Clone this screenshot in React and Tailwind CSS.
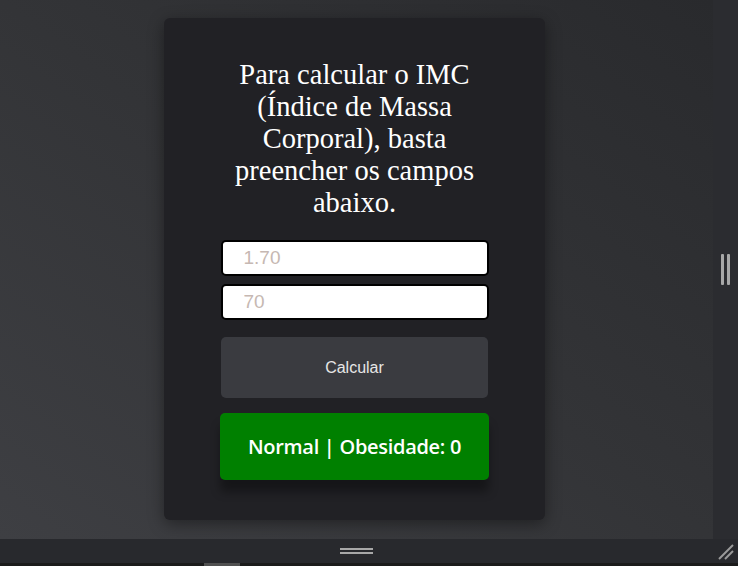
import React from 'react';

export default function App() {
    return (
        <div className="flex flex-col w-[738px] h-[566px] overflow-hidden bg-[#28292d]">
            <div className="flex flex-1 min-h-0">
                <div className="flex-1 pl-[164px] pt-[18px] bg-[linear-gradient(to_bottom_left,#292a2d_0%,#333437_50%,#3e3f43_100%)]">
                    <div className="w-[381px] h-[502px] rounded-[6px] bg-[#212125] shadow-[0_4px_16px_rgba(0,0,0,0.4)] flex flex-col items-center pt-[41px]">
                        <h1 className="w-[256px] text-center text-white text-[28.5px] leading-[32px] font-['Liberation_Serif',serif]">
                            Para calcular o IMC (Índice de Massa Corporal), basta preencher os campos abaixo.
                        </h1>
                        <div className="mt-[21px] w-[268px] flex flex-col gap-[8px] font-['Liberation_Sans',Arial,sans-serif]">
                            <input
                                type="text"
                                placeholder="1.70"
                                className="h-[36px] w-full rounded-[5px] border-2 border-black bg-white pl-[21px] text-[19px] text-black outline-none placeholder:text-[#c6b8b2]"
                            />
                            <input
                                type="text"
                                placeholder="70"
                                className="h-[36px] w-full rounded-[5px] border-2 border-black bg-white pl-[21px] text-[19px] text-black outline-none placeholder:text-[#c6b8b2]"
                            />
                        </div>
                        <button className="mt-[17px] w-[267px] h-[61px] rounded-[5px] bg-[#3a3b40] text-[#e6e6e6] text-[16px] font-['Liberation_Sans',Arial,sans-serif]">
                            Calcular
                        </button>
                        <div className="mt-[15px] w-[269px] h-[67px] rounded-[5px] bg-[#008000] shadow-[0_12px_10px_rgba(0,0,0,0.35)] flex items-center justify-center text-white text-[20px] font-semibold tracking-[-0.3px] font-['Open_Sans',sans-serif]">
                            Normal | Obesidade: 0
                        </div>
                    </div>
                </div>
                <div className="w-[25px] bg-[#2b2c30] flex items-center justify-center">
                    <div className="flex gap-[3px]">
                        <div className="w-[3px] h-[31px] bg-[#a8a8a8] rounded-[1px]" />
                        <div className="w-[3px] h-[31px] bg-[#a8a8a8] rounded-[1px]" />
                    </div>
                </div>
            </div>
            <div className="flex h-[24px] bg-[#28292d]">
                <div className="w-[713px] flex items-center justify-center">
                    <div className="flex flex-col gap-[2px]">
                        <div className="w-[33px] h-[2px] bg-[#a8a8a8]" />
                        <div className="w-[33px] h-[2px] bg-[#a8a8a8]" />
                    </div>
                </div>
                <div className="flex-1 flex items-end justify-center pb-[3px]">
                    <svg width="16" height="16" viewBox="0 0 16 16">
                        <line x1="1" y1="15" x2="15" y2="1" stroke="#9a9a9a" strokeWidth="2" />
                        <line x1="7" y1="15" x2="15" y2="7" stroke="#9a9a9a" strokeWidth="2" />
                    </svg>
                </div>
            </div>
            <div className="h-[3px] bg-[#1b1b1b] flex">
                <div className="ml-[204px] w-[36px] bg-[#505050]" />
            </div>
        </div>
    );
}
